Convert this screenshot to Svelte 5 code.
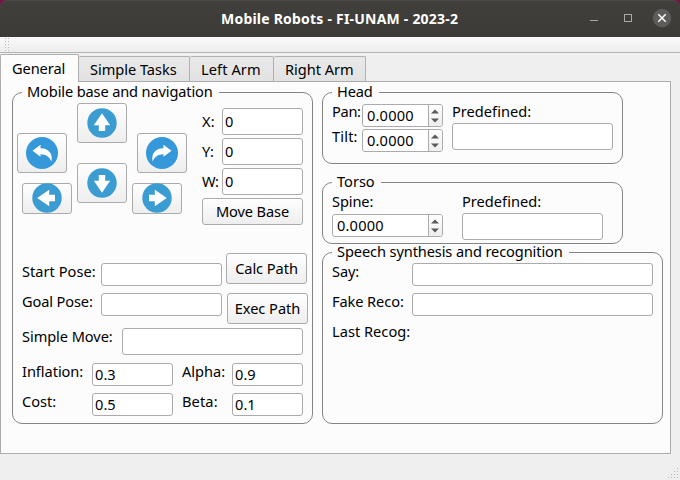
<script>
  // Side bearing of the last glyph, left out of the visible width.
  const bearing = 0.8;

  // Sets a label's letter spacing so that it takes the given width.
  function fit(node, width) {
    if (!width) return;
    const natural = node.getBoundingClientRect().width;
    node.style.letterSpacing = `${(width - bearing - natural) / node.textContent.length}px`;
  }
  const tabs = [
    { name: 'General', width: 54, tab: 79 },
    { name: 'Simple Tasks', width: 87.5, tab: 111 },
    { name: 'Left Arm', width: 60.5, tab: 84 },
    { name: 'Right Arm', width: 69.5, tab: 92 }
  ];
  const pose = [
    { name: 'X:', width: 13.5 },
    { name: 'Y:', width: 12.5 },
    { name: 'W:', width: 17 }
  ];
</script>

{#snippet text(value, width)}<span class="text" use:fit={width}>{value}</span>{/snippet}

{#snippet spin()}
  <div class="spin">
    <div class="value">{@render text('0.0000', 47.5)}</div>
    <div class="steps">
      <svg width="12" height="21" viewBox="0 0 12 21"><path d="M2 8.5 6 4.5 10 8.5ZM2 13.5 6 17.5 10 13.5Z" fill="#5a5a5a" /></svg>
    </div>
  </div>
{/snippet}

{#snippet straight(angle, low)}
  <button class="pad" class:low aria-label="Move">
    <svg width="30" height="30" viewBox="-15 -15 30 30">
      <circle r="14.7" fill="#3b9cd2" />
      <path transform="rotate({angle})" d="M0-9.8 8.2 2.2H3.2V8H-3.2V2.2H-8.2Z" fill="#fff" />
    </svg>
  </button>
{/snippet}

{#snippet turn(flip)}
  <button class="pad" aria-label="Turn">
    <svg width="32" height="32" viewBox="-16 -16 32 32">
      <circle r="16" fill="#3498db" />
      <path transform="scale({flip} 1)" d="M-9.5-2.2-1.5-8.2V-4.7C6-4.7 11 0 9.5 8.5 7.5 4 4 1.2-1.5 1.2V3.8Z" fill="#fff" />
    </svg>
  </button>
{/snippet}

<div class="window">
  <header>
    <div class="title">{@render text('Mobile Robots - FI-UNAM - 2023-2', 238)}</div>
    <svg class="controls" width="90" height="37" viewBox="0 0 90 37">
      <path d="M0 20.5H8" stroke="#aaa9a6" />
      <rect x="34.5" y="14.5" width="7" height="7" fill="none" stroke="#aaa9a6" />
      <circle cx="72" cy="18" r="9.2" fill="#5d5c5a" />
      <path d="M68.3 14.3 75.7 21.7M75.7 14.3 68.3 21.7" stroke="#fff" stroke-width="1.5" />
    </svg>
  </header>
  <div class="toolbar"><i></i></div>
  <nav>
    {#each tabs as tab, i}
      <div class="tab" class:active={i === 0} style:width="{tab.tab}px">{@render text(tab.name, tab.width)}</div>
    {/each}
  </nav>
  <main>
    <section class="group base">
      <div class="legend">{@render text('Mobile base and navigation', 186.5)}</div>
      <div class="top">
        <div class="col side">{@render turn(1)}{@render straight(-90, true)}</div>
        <div class="col mid">{@render straight(0, false)}{@render straight(180, false)}</div>
        <div class="col side last">{@render turn(-1)}{@render straight(90, true)}</div>
        <div class="pose">
          {#each pose as p}
            <div class="line"><label>{@render text(p.name, p.width)}</label><div class="input tall">{@render text('0')}</div></div>
          {/each}
          <button class="push move">{@render text('Move Base', 74)}</button>
        </div>
      </div>
      <div class="paths">
        <div class="ends">
          <div class="line"><label>{@render text('Start Pose:', 74.5)}</label><div class="input"></div></div>
          <div class="line"><label>{@render text('Goal Pose:', 71.5)}</label><div class="input"></div></div>
        </div>
        <div class="actions">
          <button class="push">{@render text('Calc Path', 63.5)}</button>
          <button class="push">{@render text('Exec Path', 66.5)}</button>
        </div>
      </div>
      <div class="line simple"><label>{@render text('Simple Move:', 91.5)}</label><div class="input tall"></div></div>
      <div class="params">
        <label>{@render text('Inflation:', 62)}</label><div class="input">{@render text('0.3', 21.5)}</div>
        <label>{@render text('Alpha:', 44)}</label><div class="input">{@render text('0.9', 21.5)}</div>
        <label>{@render text('Cost:', 35)}</label><div class="input">{@render text('0.5', 21.5)}</div>
        <label>{@render text('Beta:', 36.5)}</label><div class="input">{@render text('0.1', 21.5)}</div>
      </div>
    </section>

    <div class="right">
      <section class="group head">
        <div class="legend">{@render text('Head', 36.5)}</div>
        <div class="body">
          <div class="joints">
            <div class="line"><label>{@render text('Pan:', 29.5)}</label>{@render spin()}</div>
            <div class="line"><label>{@render text('Tilt:', 26.5)}</label>{@render spin()}</div>
          </div>
          <div class="predef"><label>{@render text('Predefined:', 80)}</label><div class="input tall"></div></div>
        </div>
      </section>
      <section class="group torso">
        <div class="legend">{@render text('Torso', 38.5)}</div>
        <div class="body">
          <div class="spine"><label>{@render text('Spine:', 42)}</label>{@render spin()}</div>
          <div class="predef"><label>{@render text('Predefined:', 80)}</label><div class="input tall"></div></div>
        </div>
      </section>
      <section class="group speech">
        <div class="legend">{@render text('Speech synthesis and recognition', 226.5)}</div>
        <div class="rows">
          <div class="line"><label>{@render text('Say:', 28)}</label><div class="input"></div></div>
          <div class="line"><label>{@render text('Fake Reco:', 72.5)}</label><div class="input"></div></div>
          <div class="line"><label>{@render text('Last Recog:', 79)}</label></div>
        </div>
      </section>
    </div>
  </main>
  <footer>
    <svg width="11" height="11" viewBox="0 0 11 11" fill="#b5b5b5">
      <path d="M9 0h1v1h-1zM6 3h1v1h-1zM9 3h1v1h-1zM3 6h1v1h-1zM6 6h1v1h-1zM9 6h1v1h-1zM0 9h1v1h-1zM3 9h1v1h-1zM6 9h1v1h-1zM9 9h1v1h-1z" />
    </svg>
  </footer>
</div>

<style>
  :global(body) { background: #7a1145; }
  .window, .window * { box-sizing: border-box; }
  .window {
    width: 680px; height: 480px; display: flex; flex-direction: column; overflow: hidden;
    background: linear-gradient(#0000 37px, #efefef 37px);
    font: 14.6px/20px "Noto Sans", sans-serif; color: #000;
  }
  .text { display: inline-block; white-space: pre; line-height: 18px; vertical-align: top; }
  header {
    height: 37px; flex: none; display: flex; justify-content: space-between; padding-left: 221px;
    background: linear-gradient(#403f3c, #3c3b38); border-radius: 7px 7px 0 0; border-top: 1px solid #4b4a47;
  }
  .title { color: #fff; font-weight: 700; font-size: 14px; padding-top: 9px; }
  .controls { margin-top: -1px; }
  .toolbar { height: 16px; flex: none; border-bottom: 1px solid #b4b4b4; background: linear-gradient(#fafafa, #ededed); padding-left: 5px; }
  .toolbar i { display: block; width: 4px; height: 15px; background: radial-gradient(circle at 0.5px 0.5px, #b8b8b8 0.6px, #0000 0.7px) 0 1px / 3px 3px; }
  nav { height: 28px; flex: none; display: flex; align-items: flex-end; padding-top: 1px; }
  .tab {
    height: 25px; border: 1px solid #b0b0b0; border-left: 0; border-bottom: 0; border-radius: 2px 2px 0 0;
    padding: 3px 0 0 11px; background: linear-gradient(#e9e9e9, #e2e2e2); flex: none;
  }
  .active { height: 28px; border-left: 1px solid #b0b0b0; background: #fcfcfc; padding: 4px 0 0 11px; margin-bottom: -1px; z-index: 1; }
  main {
    width: 671px; height: 373px; flex: none; border: 1px solid #acacac; background: #fcfcfc;
    display: flex; gap: 9px; padding: 10px 0 0 11px;
  }
  .group { border: 1px solid #858585; border-radius: 10px; flex: none; }
  .legend {
    width: fit-content; height: 20px; margin: -11px 0 1px 9px; padding: 0 6px 0 5px;
    background: linear-gradient(#0000 8px, #fcfcfc 8px 13px, #0000 13px);
  }
  .base { width: 301px; height: 332px; }
  label { display: block; flex: none; height: 20px; }
  .line { display: flex; align-items: flex-start; }
  .input {
    height: 23px; border: 1px solid #ababab; border-radius: 3px; background: #fff;
    padding: 1px 2px; margin-top: 1px; flex: none;
  }
  .input.tall { height: 27px; padding-top: 3px; }
  button {
    font: inherit; color: inherit; border: 1px solid #ababab; border-radius: 3px; padding: 0; margin: 0;
    background: linear-gradient(#fefefe, #eeeeee); display: flex; align-items: center; justify-content: center; flex: none;
  }
  .top { display: flex; height: 150px; padding-left: 4px; }
  .col { display: flex; flex-direction: column; width: 60px; }
  .side { padding-top: 30px; gap: 10px; }
  .mid { gap: 20px; }
  .pad { width: 50px; height: 40px; }
  .pad svg { display: block; flex: none; }
  .low { height: 31px; margin-left: 5px; padding-bottom: 1px; }
  .last .low { margin-left: -5px; }
  .pose { margin-left: 5px; width: 101px; padding-top: 5px; display: flex; flex-direction: column; gap: 3px; }
  .pose label { width: 20px; margin-top: 4px; }
  .pose .input { width: 81px; margin-top: 0; }
  .push { width: 81px; height: 31px; padding-bottom: 2px; }
  .move { width: 101px; height: 27px; }
  .paths { display: flex; padding-left: 9px; height: 74px; }
  .ends { display: flex; flex-direction: column; gap: 6px; padding-top: 9px; width: 204px; }
  .ends label { width: 79px; }
  .ends .input { width: 121px; }
  .actions { display: flex; flex-direction: column; gap: 9px; }
  .actions .push + .push { margin-left: 1px; }
  .simple { padding-left: 9px; height: 35px; }
  .simple label { width: 100px; }
  .simple .input { width: 181px; }
  .params { display: grid; grid-template-columns: 70px 90px 50px 71px; grid-auto-rows: 30px; padding-left: 9px; }
  .params .input:nth-child(4n + 2) { width: 81px; }
  .right { display: flex; flex-direction: column; }
  .head { width: 301px; height: 72px; margin-bottom: 18px; }
  .torso { width: 301px; height: 62px; margin-bottom: 8px; }
  .speech { width: 341px; height: 172px; }
  .body { display: flex; padding-left: 9px; margin-top: -1px; }
  .joints { display: flex; flex-direction: column; width: 120px; }
  .joints label { width: 30px; }
  .joints .line { height: 25px; }
  .spin {
    width: 81px; height: 23px; display: flex; margin-top: 2px; border: 1px solid #ababab;
    border-radius: 3px; background: #fff; overflow: hidden; flex: none;
  }
  .value { flex: 1; padding: 1px 0 0 4px; }
  .steps { width: 14px; border-left: 1px solid #ababab; background: linear-gradient(#fefefe, #eeeeee); }
  .steps svg { display: block; }
  .predef .input { width: 161px; }
  .spine { width: 130px; }
  .spine .spin { width: 111px; }
  .torso .predef .input { width: 141px; }
  .rows { padding-left: 9px; display: flex; flex-direction: column; gap: 6px; margin-top: -1px; }
  .rows label { width: 80px; }
  .rows .input { width: 241px; }
  footer { flex: 1; display: flex; justify-content: flex-end; align-items: flex-end; padding: 0 1px 1px 0; }
</style>
